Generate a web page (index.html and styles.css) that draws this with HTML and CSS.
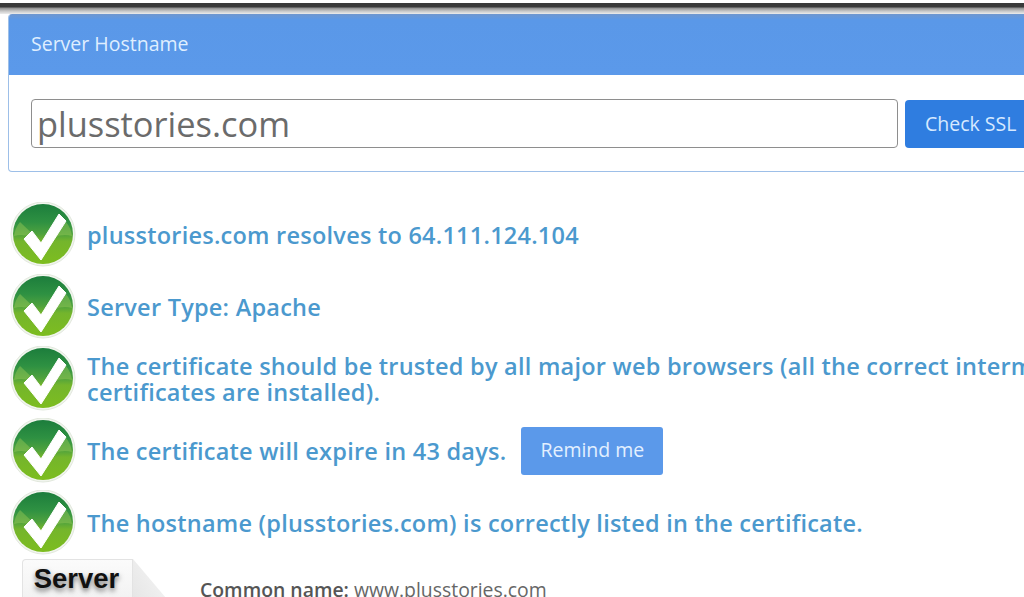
FILE: index.html
```html
<!DOCTYPE html>
<html lang="en">
<head>
<meta charset="utf-8">
<title>SSL Checker</title>
<link rel="stylesheet" href="styles.css">
</head>
<body>
<svg class="defs" width="0" height="0" aria-hidden="true">
  <defs>
    <linearGradient id="ball" x1="0" y1="0" x2="0" y2="1">
      <stop offset="0" stop-color="#1c7d3c"/>
      <stop offset="0.3" stop-color="#2e9142"/>
      <stop offset="0.5" stop-color="#4fa23e"/>
      <stop offset="0.62" stop-color="#74b52c"/>
      <stop offset="1" stop-color="#7dbd1f"/>
    </linearGradient>
    <symbol id="ok" viewBox="0 0 66 66">
      <circle cx="33" cy="32" r="32" fill="#f1f5ee" stroke="#e2e8dd" stroke-width="1"/>
      <circle cx="33" cy="32" r="30" fill="url(#ball)"/>
      <path d="M4 34 Q18 30 33 42 Q48 30 62 34 Q61 26 56 20 L33 42 L10 20 Q5 26 4 34 Z" fill="#a5cf5a" opacity=".4"/>
      <path d="M14 37 L22 29 L31 41 L49 12 L56 19 L31 58 Z" fill="#fff" stroke="#fff" stroke-width="1" stroke-linejoin="round"/>
    </symbol>
  </defs>
</svg>
<div class="topbar"></div>
<main class="page">
  <section class="panel">
    <header class="panel-head">Server Hostname</header>
    <div class="panel-body">
      <div class="field">plusstories.com</div>
      <button class="check">Check SSL</button>
    </div>
  </section>
  <ul class="results">
    <li class="row"><svg class="icon"><use href="#ok"/></svg><p>plusstories.com resolves to 64.111.124.104</p></li>
    <li class="row"><svg class="icon"><use href="#ok"/></svg><p>Server Type: Apache</p></li>
    <li class="row"><svg class="icon"><use href="#ok"/></svg><p>The certificate should be trusted by all major web browsers (all the correct intermediate<br>certificates are installed).</p></li>
    <li class="row"><svg class="icon"><use href="#ok"/></svg><p>The certificate will expire in 43 days.</p><button class="remind">Remind me</button></li>
    <li class="row"><svg class="icon"><use href="#ok"/></svg><p>The hostname (plusstories.com) is correctly listed in the certificate.</p></li>
  </ul>
  <div class="server">
    <div class="doc"><span>Server</span></div>
    <div class="common"><b>Common name:</b> www.plusstories.com</div>
  </div>
</main>
</body>
</html>
```
FILE: styles.css
```css
html, body { margin: 0; padding: 0; height: 597px; overflow: hidden; background: #fff; }
body { font-family: "Open Sans", "Liberation Sans", sans-serif; position: relative; }
.defs { display: block; height: 0; }
.topbar {
  height: 11px; margin-top: 3px;
  background: linear-gradient(#3a3a3a 0, #3a3a3a 4px, #8f8f8f 5px, #c6c6c6 8px, #ececec 11px);
}
.page { width: 1180px; padding-left: 8px; }
.panel {
  width: 1100px; height: 158px; box-sizing: border-box;
  border: 1px solid #9dbfe8; border-top: 0; border-radius: 4px;
  overflow: hidden;
}
.panel-head {
  height: 61px; box-sizing: border-box; padding: 16px 0 0 22px;
  background: linear-gradient(#6f97cf 0, #5a98e8 6px, #5b99ea 100%);
  color: #dfeeff; font-size: 19.5px; line-height: 27px;
}
.panel-body { display: flex; gap: 7px; padding: 24px 0 0 22px; align-items: flex-start; }
.field {
  width: 867px; height: 49px; box-sizing: border-box;
  border: 1px solid #8e8e8e; border-radius: 4px;
  padding: 0 5px; font-size: 34.4px; line-height: 47px; color: #6b6b6b;
}
.check {
  width: 170px; height: 48px; margin-top: 1px; border: 0; border-radius: 4px 0 0 4px;
  background: #2f7de0; color: #d6e9ff; text-align: left; padding: 0 0 0 20px;
  font: 19.5px/48px "Open Sans", sans-serif;
}
.results { list-style: none; margin: 27px 0 0; padding: 0; }
.row { display: flex; align-items: center; height: 72px; margin-left: 2px; }
.icon { width: 66px; height: 66px; flex: none; margin-right: 11px; }
.row p {
  margin: 0; font-size: 23.5px; line-height: 26px; font-weight: 600; color: #4b99ce;
  letter-spacing: .24px; white-space: nowrap;
}
.remind {
  margin-left: 15px; width: 142px; height: 48px; border: 0; border-radius: 3px;
  background: #5b99ea; color: #e3f0ff; font: 19.5px/46px "Open Sans", sans-serif; padding: 0 0 2px;
}
.server { display: flex; align-items: flex-start; }
.doc {
  width: 111px; height: 60px; margin-left: 14px; flex: none; box-sizing: border-box;
  border: 1px solid #e3e3e3; border-bottom: 0; border-radius: 4px 0 0 0;
  padding-right: 2px; text-align: center;
  background: linear-gradient(#fbfbfb, #eeeeee);
  position: relative;
}
.doc::after {
  content: ""; position: absolute; left: 110px; top: -1px; width: 33px; height: 39px;
  background: linear-gradient(60deg, #e6e6e6, #f6f6f6);
  clip-path: polygon(0 0, 100% 100%, 0 100%);
}
.doc span {
  font: bold 27.5px/38px "Liberation Sans", sans-serif; color: #111;
  text-shadow: 0 3px 5px #777;
}
.common { margin: 19px 0 0 67px; font-size: 19.4px; line-height: 24px; color: #666; white-space: nowrap; }
.common b { font-weight: 600; color: #555; }
```
